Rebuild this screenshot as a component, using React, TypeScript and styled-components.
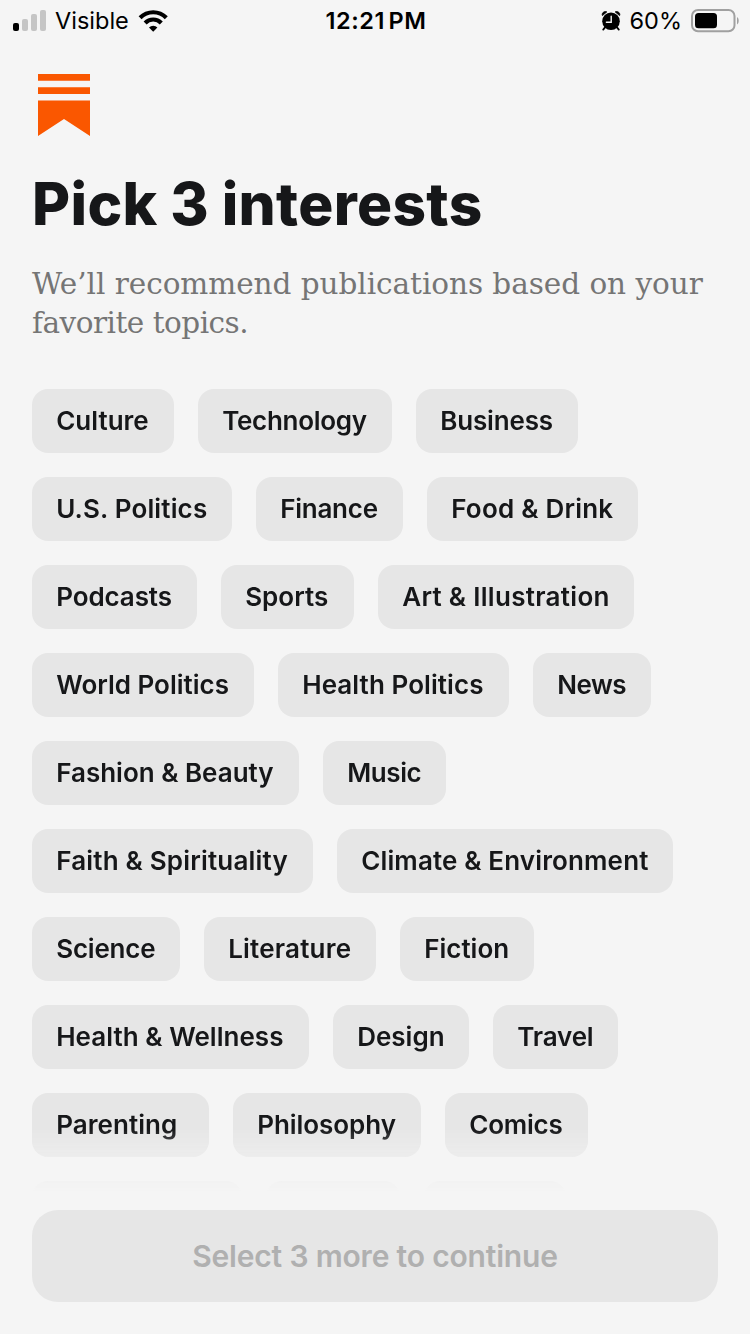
import React from 'react';
import styled, { createGlobalStyle } from 'styled-components';

const GlobalStyle = createGlobalStyle`
  * { box-sizing: border-box; }
  body { margin: 0; background: #f5f5f5; }
`;

const Screen = styled.main`
  display: flex;
  flex-direction: column;
  width: 750px;
  height: 1334px;
  overflow: hidden;
  background: #f5f5f5;
  color: #161719;
  font-family: Inter, 'Liberation Sans', sans-serif;
`;

const StatusBar = styled.div`
  display: grid;
  grid-template-columns: 1fr auto 1fr;
  align-items: center;
  height: 40px;
  padding: 0 11px 0 13px;
  color: #000;
  font-size: 23.5px;
  line-height: 40px;
`;

const StatusGroup = styled.div<{ $end?: boolean }>`
  display: flex;
  align-items: center;
  justify-content: ${(p) => (p.$end ? 'flex-end' : 'flex-start')};
  gap: 9px;
`;

const StatusText = styled.span<{ $bold?: boolean }>`
  padding-top: 1px;
  font-weight: ${(p) => (p.$bold ? 600 : 400)};
  letter-spacing: ${(p) => (p.$bold ? '0.6px' : '0')};
  word-spacing: ${(p) => (p.$bold ? '-3px' : '0')};
`;

const Header = styled.header`
  display: flex;
  flex-direction: column;
  align-items: flex-start;
  padding: 34px 32px 0;
`;

const Logo = styled.svg`
  display: block;
  margin-left: 6px;
`;

const Title = styled.h1`
  margin: 32px 0 0;
  font-size: 58.5px;
  font-weight: 850;
  line-height: 72px;
  letter-spacing: 0.35px;
  word-spacing: -0.5px;
  white-space: nowrap;
`;

const Subtitle = styled.p`
  margin: 25px 0 0;
  color: #757575;
  font-family: 'DejaVu Serif', serif;
  font-size: 29.5px;
  line-height: 39px;
  white-space: nowrap;
`;

const SubtitleLine = styled.span<{ $tracking: number }>`
  display: block;
  letter-spacing: ${(p) => p.$tracking}px;
`;

const Topics = styled.div`
  display: flex;
  flex: 1;
  flex-wrap: wrap;
  align-content: flex-start;
  gap: 24px;
  min-height: 0;
  margin-top: 46px;
  padding: 0 32px;
  overflow: hidden;
  mask-image: linear-gradient(to bottom, #000 740px, transparent 803px);
`;

const Chip = styled.button<{ $width: number; $tracking: number }>`
  width: ${(p) => p.$width}px;
  height: 64px;
  padding: 0 0 0 24.2px;
  border: 0;
  border-radius: 16px;
  background: #e6e6e6;
  color: inherit;
  font: 600 26px/64px Inter, 'Liberation Sans', sans-serif;
  letter-spacing: ${(p) => p.$tracking}px;
  text-align: left;
  white-space: nowrap;
`;

const Footer = styled.footer`
  padding: 0 32px 32px;
`;

const ContinueButton = styled.button`
  display: block;
  width: 100%;
  height: 92px;
  padding: 0;
  border: 0;
  border-radius: 26px;
  background: #e6e6e6;
  color: #b0b0b0;
  font: 600 30px/92px Inter, 'Liberation Sans', sans-serif;
  letter-spacing: -0.18px;
`;

// label, chip width, letter spacing
const topics: [string, number, number][] = [
  ['Culture', 142, 0],
  ['Technology', 194, -0.3],
  ['Business', 162, -0.15],
  ['U.S. Politics', 200, 0.15],
  ['Finance', 147, -0.25],
  ['Food & Drink', 211, 0.22],
  ['Podcasts', 165, -0.1],
  ['Sports', 133, 0],
  ['Art & Illustration', 256, 0.3],
  ['World Politics', 222, 0],
  ['Health Politics', 231, 0.07],
  ['News', 118, -0.5],
  ['Fashion & Beauty', 267, 0],
  ['Music', 123, -0.4],
  ['Faith & Spirituality', 281, 0.19],
  ['Climate & Environment', 336, 0.14],
  ['Science', 148, -0.2],
  ['Literature', 172, 0.2],
  ['Fiction', 134, 0],
  ['Health & Wellness', 277, 0.04],
  ['Design', 136, 0],
  ['Travel', 125, -0.15],
  ['Parenting', 177, 0.05],
  ['Philosophy', 188, -0.05],
  ['Comics', 143, -0.2],
  ['', 210, 0],
  ['', 134, 0],
  ['', 142, 0],
];

const SignalIcon = () => (
  <svg width="33" height="22" viewBox="0 0 33 22">
    <rect x="0" y="13" width="6" height="8" rx="2" fill="#000" />
    <rect x="9" y="9" width="6" height="12" rx="2" fill="#c5c5c5" />
    <rect x="18" y="4" width="6" height="17" rx="2" fill="#c5c5c5" />
    <rect x="27" y="0" width="6" height="21" rx="2" fill="#c5c5c5" />
  </svg>
);

const WifiIcon = () => (
  <svg width="30" height="22" viewBox="0 0 30 22">
    <g fill="none" stroke="#000" strokeWidth="4.2">
      <path d="M2.1 7.7 A18.5 18.5 0 0 1 28.3 7.7" />
      <path d="M7.1 12.9 A11.4 11.4 0 0 1 23.3 12.9" />
    </g>
    <path d="M11 17.6 A5.9 5.9 0 0 1 19.4 17.6 L15.2 21.8 Z" fill="#000" />
  </svg>
);

const AlarmIcon = () => (
  <svg width="20" height="20" viewBox="0 0 20 20">
    <circle cx="10" cy="10.2" r="8.8" fill="#000" />
    <path
      d="M1.4 4.6 C0.4 2.3 3 -0.4 5.8 0.9 Z M18.6 4.6 C19.6 2.3 17 -0.4 14.2 0.9 Z"
      fill="#000"
      stroke="#000"
      strokeWidth="0.8"
      strokeLinejoin="round"
    />
    <path d="M4.2 16.2 L2.2 18.6 M15.8 16.2 L17.8 18.6" stroke="#000" strokeWidth="1.8" strokeLinecap="round" />
    <path d="M10.2 5.2 V11.2 H5.4" fill="none" stroke="#f5f5f5" strokeWidth="1.4" strokeLinecap="round" />
  </svg>
);

const BatteryIcon = () => (
  <svg width="48" height="24" viewBox="0 0 48 24">
    <rect x="1" y="1" width="42.5" height="21.2" rx="6" fill="none" stroke="#a0a0a0" strokeWidth="2" />
    <rect x="4" y="4" width="22" height="15.2" rx="3.5" fill="#000" />
    <path d="M46 8 C48.3 9.5 48.3 14 46 15.5 Z" fill="#a0a0a0" />
  </svg>
);

export default function App() {
  return (
    <Screen>
      <GlobalStyle />
      <StatusBar>
        <StatusGroup>
          <SignalIcon />
          <StatusText>Visible</StatusText>
          <WifiIcon />
        </StatusGroup>
        <StatusText $bold>12:21 PM</StatusText>
        <StatusGroup $end>
          <AlarmIcon />
          <StatusText>60%</StatusText>
          <BatteryIcon />
        </StatusGroup>
      </StatusBar>
      <Header>
        <Logo width="52" height="62" viewBox="0 0 52 62" fill="#fa5700">
          <path d="M0 0H52V6.7H0Z M0 13.2H52V20H0Z M0 26.6H52V62L26 45L0 62Z" />
        </Logo>
        <Title>Pick 3 interests</Title>
        <Subtitle>
          <SubtitleLine $tracking={-0.05}>We’ll recommend publications based on your</SubtitleLine>
          <SubtitleLine $tracking={-0.5}>favorite topics.</SubtitleLine>
        </Subtitle>
      </Header>
      <Topics>
        {topics.map(([label, width, tracking], i) => (
          <Chip key={i} $width={width} $tracking={tracking}>
            {label}
          </Chip>
        ))}
      </Topics>
      <Footer>
        <ContinueButton disabled>Select 3 more to continue</ContinueButton>
      </Footer>
    </Screen>
  );
}
